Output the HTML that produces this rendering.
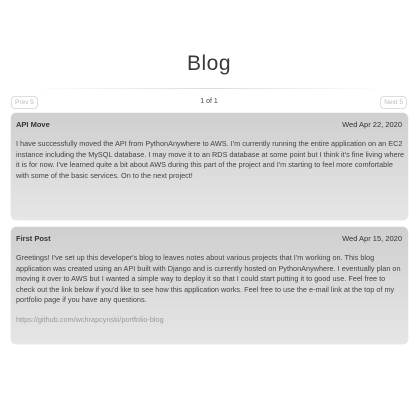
<!DOCTYPE html>
<html><head><style>
body{margin:0;width:418px;height:418px;background:#fff;font-family:"Liberation Sans",sans-serif;color:#333;position:relative;overflow:hidden}
h1{position:absolute;top:52px;left:0;width:418px;text-align:center;margin:0;font-size:21px;font-weight:normal;letter-spacing:0.5px;color:#3a3a3a}
.line{position:absolute;top:88px;left:30px;width:358px;height:1px;background:linear-gradient(90deg,#fff,#ddd,#fff)}
.btn{position:absolute;top:96px;font-size:6.5px;color:#bbb;border:1px solid #ddd;border-radius:4px;padding:2px 3px}
.pg{position:absolute;top:98px;left:0;width:418px;text-align:center;font-size:7px;color:#444}
.card{position:absolute;left:11px;width:397px;border-radius:5px;background:linear-gradient(#cfcfcf,#e6e6e6);box-shadow:0 0 1px #bbb}
.hd{position:absolute;top:7px;left:5px;right:6px;font-size:7.5px;font-weight:bold;color:#333}
.hd span{float:right;font-weight:normal}
.bd{position:absolute;top:26px;left:5px;right:6px;font-size:7.3px;line-height:10.5px;color:#444;white-space:nowrap}
.lk{color:#999;margin-top:9px}
</style></head><body>
<h1>Blog</h1>
<div class="line"></div>
<div class="btn" style="left:11px">Prev 5</div>
<div class="pg">1 of 1</div>
<div class="btn" style="right:11px">Next 5</div>
<div class="card" style="top:113px;height:107px">
<div class="hd">API Move<span>Wed Apr 22, 2020</span></div>
<div class="bd">I have successfully moved the API from PythonAnywhere to AWS. I'm currently running the entire application on an EC2<br>instance including the MySQL database. I may move it to an RDS database at some point but I think it's fine living where<br>it is for now. I've learned quite a bit about AWS during this part of the project and I'm starting to feel more comfortable<br>with some of the basic services. On to the next project!</div>
</div>
<div class="card" style="top:227px;height:117px">
<div class="hd">First Post<span>Wed Apr 15, 2020</span></div>
<div class="bd">Greetings! I've set up this developer's blog to leaves notes about various projects that I'm working on. This blog<br>application was created using an API built with Django and is currently hosted on PythonAnywhere. I eventually plan on<br>moving it over to AWS but I wanted a simple way to deploy it so that I could start putting it to good use. Feel free to<br>check out the link below if you'd like to see how this application works. Feel free to use the e-mail link at the top of my<br>portfolio page if you have any questions.<div class="lk">https://github.com/wchrapcynski/portfolio-blog</div></div>
</div>
</body></html>
